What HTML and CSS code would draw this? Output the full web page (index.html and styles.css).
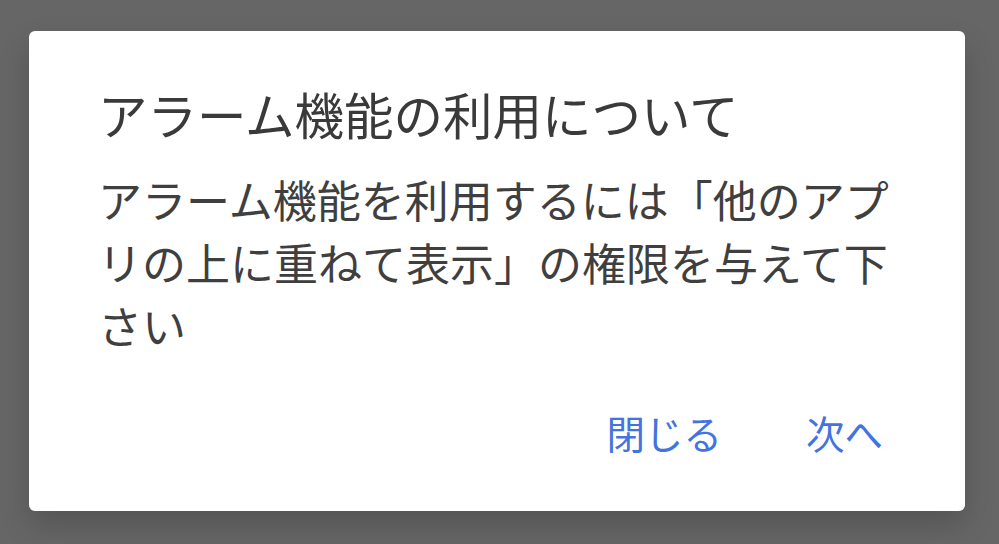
FILE: index.html
```html
<!DOCTYPE html>
<html>
  <head>
    <title>アラーム機能の利用について</title>
    <meta charset="UTF-8">
    <link rel="stylesheet" href="styles.css">
  </head>
  <body>

<!-- DIALOG -->
<div class="dialog">
<p class="title">アラーム機能の利用について</p>
<p class="message">アラーム機能を利用するには「他のアプリの上に重ねて表示」の権限を与えて下さい</p>
<div class="buttons">
<span class="button">閉じる</span>
<span class="button">次へ</span>
</div>
</div>

  </body>
</html>
```
FILE: styles.css
```css
html, body{
margin: 0;
height: 100%;
}

body{
background-color: #666666;
padding: 31px 0px 0px 29px;
box-sizing: border-box;
font-family: "Noto Sans CJK JP", "Noto Sans", sans-serif;
}

.dialog{
width: 936px;
height: 480px;
box-sizing: border-box;
padding: 53px 72px 0px 69px;
background-color: white;
border-radius: 6px;
box-shadow: 0px 14px 30px rgba(0, 0, 0, 0.18);
}

.title{
margin: 0;
font-size: 49.5px;
line-height: 60px;
color: #3a3a3a;
}

.message{
margin: 24px 0px 0px 0px;
font-size: 44px;
line-height: 63px;
color: #3f3f3f;
}

.buttons{
display: flex;
justify-content: flex-end;
gap: 84px;
margin: 50px 10px 0px 0px;
}

.button{
font-size: 38.5px;
line-height: 50px;
color: #4273e0;
}
```
